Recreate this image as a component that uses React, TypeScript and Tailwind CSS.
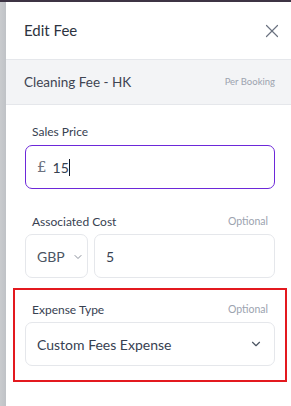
import { X, ChevronDown } from 'lucide-react'

export default function App() {
  return (
    <div className="flex h-[406px] w-[291px] flex-col overflow-hidden bg-white font-['Lato',sans-serif]">
      <div className="h-[2px] w-full bg-[#3d3444]" />
      <div className="flex flex-1">
        <div className="w-[6px] bg-gradient-to-r from-[#c9cbce] to-[#bfc2c6]" />
        <div className="flex flex-1 flex-col">
          <div className="flex h-[58px] items-center justify-between border-b border-[#e5e7eb] pl-[18px] pr-[8px]">
            <span className="text-[15px] text-[#2d3340]">Edit Fee</span>
            <X className="h-[22px] w-[22px] text-[#6b7280]" strokeWidth={1.3} />
          </div>
          <div className="flex h-[45px] items-center justify-between border-b border-[#e5e7eb] bg-[#f3f4f6] pl-[18px] pr-[16px]">
            <span className="text-[13.5px] text-[#3f4552]">Cleaning Fee - HK</span>
            <span className="text-[9.5px] text-[#9ca3af]">Per Booking</span>
          </div>

          <div className="flex flex-col pl-[19px] pr-[16px] pt-[18px]">
            <span className="pl-[7px] text-[12px] text-[#374151]">Sales Price</span>
            <div className="mt-[4px] flex h-[44px] items-center rounded-[7px] border-[1.5px] border-[#6d28d9] pl-[11px]">
              <span className="font-['DejaVu_Serif',serif] text-[15px] text-[#6b7280]">£</span>
              <span className="ml-[6px] text-[14px] text-[#374151]">15</span>
              <span className="h-[17px] w-px bg-[#111827]" />
            </div>

            <div className="mt-[24px] flex items-center justify-between pl-[7px] pr-[7px]">
              <span className="text-[12px] text-[#374151]">Associated Cost</span>
              <span className="text-[10.5px] text-[#9ca3af]">Optional</span>
            </div>
            <div className="mt-[3px] flex gap-[6px]">
              <div className="flex h-[44px] w-[63px] items-center gap-[7px] rounded-[7px] border border-[#e5e7eb] pl-[11px]">
                <span className="text-[14px] text-[#4b5563]">GBP</span>
                <ChevronDown className="mt-[2px] h-[12px] w-[12px] text-[#6b7280]" strokeWidth={1.6} />
              </div>
              <div className="flex h-[44px] flex-1 items-center rounded-[7px] border border-[#e5e7eb] pl-[11px]">
                <span className="text-[14px] text-[#374151]">5</span>
              </div>
            </div>
          </div>

          <div className="ml-[7px] mr-[4px] mt-[10px] flex flex-col border-2 border-[#e3191f] pb-[14px] pl-[10px] pr-[10px] pt-[11px]">
            <div className="flex items-center justify-between pl-[7px] pr-[7px]">
              <span className="text-[12px] text-[#374151]">Expense Type</span>
              <span className="text-[10.5px] text-[#9ca3af]">Optional</span>
            </div>
            <div className="mt-[3px] flex h-[44px] items-center justify-between rounded-[7px] border border-[#e5e7eb] pl-[11px] pr-[11px]">
              <span className="text-[14px] text-[#374151]">Custom Fees Expense</span>
              <ChevronDown className="h-[14px] w-[14px] text-[#4b5563]" strokeWidth={2} />
            </div>
          </div>
        </div>
      </div>
    </div>
  )
}
